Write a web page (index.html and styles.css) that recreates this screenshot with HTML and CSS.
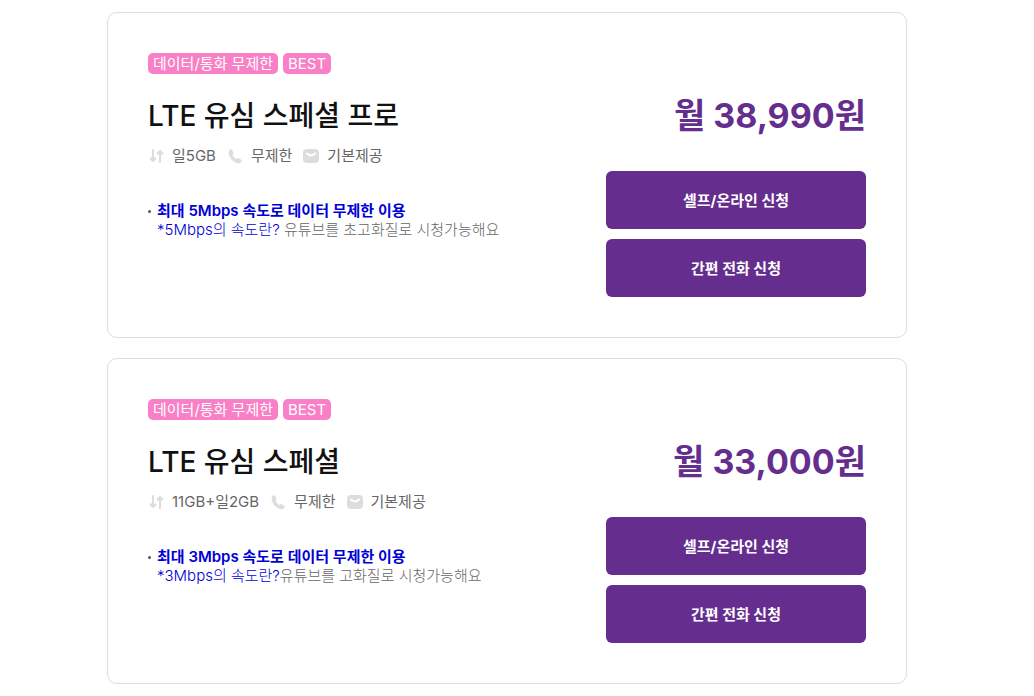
FILE: index.html
```
<!DOCTYPE html>
<html lang="ko">
<head>
    <meta charset="UTF-8">
    <meta name="viewport" content="width=device-width, initial-scale=1.0">
    <title>LTE 유심 요금제</title>
    <link rel="stylesheet" href="styles.css">
</head>
<body>
    <svg width="0" height="0" class="sprite">
        <symbol id="icon-data" viewBox="0 0 16 16">
            <path d="M5 2v11M2.500 10.500 5 13l2.500-2.500zM12 14V3M9.500 5.500 12 3l2.500 2.500z"/>
        </symbol>
        <symbol id="icon-call" viewBox="0 0 16 16">
            <path d="M3 1.500c.9-.6 1.900-.3 2.400.7l1 2.200c.4 1 0 1.600-.9 2.300.8 2 2 3.300 4 4.200.8-.9 1.500-1.100 2.400-.6l2 1.200c1 .7 1.100 1.700.3 2.600-1.300 1.500-3.500 1.600-5.700.5C5.200 13 2.600 9.900 1.800 6.300c-.5-2.200 0-4 1.200-4.800z" stroke="none"/>
        </symbol>
        <symbol id="icon-mail" viewBox="0 0 16 16">
            <rect x="0" y="1" width="16" height="14" rx="4" stroke="none"/>
            <path class="flap" d="M4 5.500c2.500 2.500 5.500 2.500 8 0"/>
        </symbol>
    </svg>

    <ul class="plan-list">
        <li class="plan">
            <div class="plan-info">
                <div class="tags"><span>데이터/통화 무제한</span><span>BEST</span></div>
                <h2>LTE 유심 스페셜 프로</h2>
                <ul class="spec">
                    <li><svg><use href="#icon-data"/></svg>일5GB</li>
                    <li><svg><use href="#icon-call"/></svg>무제한</li>
                    <li><svg><use href="#icon-mail"/></svg>기본제공</li>
                </ul>
                <div class="desc">
                    <strong>최대 5Mbps 속도로 데이터 무제한 이용</strong><br>
                    <em>*5Mbps의 속도란?</em> 유튜브를 초고화질로 시청가능해요
                </div>
            </div>
            <div class="plan-buy">
                <p class="price">월 38,990원</p>
                <button type="button">셀프/온라인 신청</button>
                <button type="button">간편 전화 신청</button>
            </div>
        </li>
        <li class="plan">
            <div class="plan-info">
                <div class="tags"><span>데이터/통화 무제한</span><span>BEST</span></div>
                <h2>LTE 유심 스페셜</h2>
                <ul class="spec">
                    <li><svg><use href="#icon-data"/></svg>11GB+일2GB</li>
                    <li><svg><use href="#icon-call"/></svg>무제한</li>
                    <li><svg><use href="#icon-mail"/></svg>기본제공</li>
                </ul>
                <div class="desc">
                    <strong>최대 3Mbps 속도로 데이터 무제한 이용</strong><br>
                    <em>*3Mbps의 속도란?</em>유튜브를 고화질로 시청가능해요
                </div>
            </div>
            <div class="plan-buy">
                <p class="price">월 33,000원</p>
                <button type="button">셀프/온라인 신청</button>
                <button type="button">간편 전화 신청</button>
            </div>
        </li>
    </ul>
</body>
</html>
```
FILE: styles.css
```
* {
    box-sizing: border-box;
    margin: 0;
    padding: 0;
}
body {
    padding: 12px 40px 12px 20px;
    font-family: Inter, "Noto Sans CJK KR", sans-serif;
    font-size: 15px;
    color: #666;
    background-color: #fff;
}
.sprite {
    display: block;
}
ul {
    list-style: none;
}
.plan-list {
    display: flex;
    flex-direction: column;
    gap: 20px;
    max-width: 800px;
    margin: 0 auto;
}
.plan {
    display: flex;
    justify-content: space-between;
    padding: 40px;
    border: 1px solid #ddd;
    border-radius: 10px;
}
.tags {
    display: flex;
    gap: 5px;
}
.tags span {
    padding: 0 5px;
    border-radius: 5px;
    background-color: #f97fc6;
    color: #fff;
    line-height: 21px;
}
h2 {
    margin-top: 22px;
    color: #111;
    font-size: 28px;
    font-weight: 500;
    line-height: 40px;
}
.spec {
    display: flex;
    gap: 11px;
    margin-top: 10px;
    line-height: 20px;
}
.spec li {
    display: flex;
    align-items: center;
    gap: 8px;
}
.spec svg {
    width: 16px;
    height: 16px;
    fill: #ddd;
    stroke: #ddd;
    stroke-width: 2;
    stroke-linejoin: round;
    stroke-linecap: round;
}
.flap {
    fill: none;
    stroke: #fff;
}
.desc {
    position: relative;
    margin-top: 35px;
    padding-left: 9px;
    font-weight: 300;
    line-height: 19px;
}
.desc::before {
    content: "";
    position: absolute;
    top: 9px;
    left: 0;
    width: 3px;
    height: 3px;
    border-radius: 50%;
    background-color: #555;
}
.desc strong {
    color: #0000d6;
    font-weight: 600;
}
.desc em {
    color: #0000d6;
    font-style: normal;
}
.plan-buy {
    display: flex;
    flex-direction: column;
    gap: 10px;
    width: 260px;
    padding-top: 38px;
}
.price {
    margin-bottom: 20px;
    color: #642d8e;
    font-size: 34px;
    font-weight: 700;
    line-height: 50px;
    text-align: right;
}
button {
    height: 58px;
    padding-bottom: 2px;
    border: none;
    border-radius: 6px;
    background-color: #642d8e;
    color: #fff;
    font: 700 15px Inter, "Noto Sans CJK KR", sans-serif;
    cursor: pointer;
}
```
